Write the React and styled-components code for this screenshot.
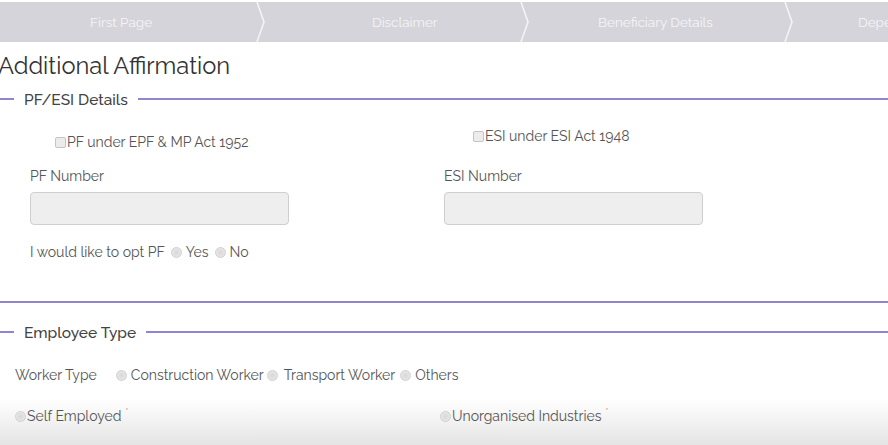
import React from "react";
import styled, { createGlobalStyle } from "styled-components";

const GlobalStyle = createGlobalStyle`
  html, body { margin: 0; padding: 0; }
  body {
    font-family: "Raleway", Lato, "Noto Sans", sans-serif;
    color: #555;
    background: #fff;
    overflow: hidden;
  }
`;

const Page = styled.div`
  width: 888px;
  height: 445px;
  overflow: hidden;
  background: linear-gradient(to bottom, #fff 0, #fff 398px, #f3f3f3 420px, #e4e4e4 445px);
`;

const StepBar = styled.div`
  display: flex;
  height: 40px;
  margin-top: 2px;
  background: #d4d4da;
  overflow: hidden;
`;

const Step = styled.div`
  flex: 0 0 ${(p) => p.$w}px;
  display: flex;
  align-items: center;
  padding-left: ${(p) => p.$pad}px;
  box-sizing: border-box;
  color: #f5f5f8;
  font-size: 13.5px;
  white-space: nowrap;
`;

const Sep = styled.svg`
  flex: 0 0 10px;
  height: 40px;
  display: block;
`;

const Chevron = () => (
  <Sep viewBox="0 0 10 40">
    <path d="M1 0 L8 20 L1 40" fill="none" stroke="#f4f4f6" strokeWidth="1.6" />
  </Sep>
);

const Heading = styled.h1`
  margin: 10px 0 0 -2px;
  font-size: 23.7px;
  font-weight: 400;
  color: #333;
  line-height: 28px;
  height: 28px;
`;

const LegendRow = styled.div`
  display: flex;
  align-items: center;
  margin-top: ${(p) => p.$mt}px;
  height: 20px;
`;

const Line = styled.div`
  height: 2px;
  background: #8f86cf;
  flex: ${(p) => (p.$grow ? "1 1 auto" : `0 0 ${p.$w}px`)};
`;

const LegendText = styled.span`
  padding: 0 10px;
  font-size: 15.5px;
  font-weight: 500;
  color: #444;
`;

const Grid = styled.div`
  display: grid;
  grid-template-columns: 414px 414px;
  padding-left: 30px;
`;

const Col = styled.div`
  display: flex;
  flex-direction: column;
`;

const CheckRow = styled.label`
  display: flex;
  align-items: center;
  margin-left: ${(p) => p.$ml}px;
  margin-top: ${(p) => p.$mt}px;
  font-size: 14px;
  color: #555;
  height: 16px;
`;

const Check = styled.input.attrs({ type: "checkbox" })`
  appearance: none;
  margin: 0 1px 0 0;
  width: 11px;
  height: 11px;
  border: 1px solid #c4c4c4;
  border-radius: 2px;
  background: #ececec;
  box-sizing: border-box;
`;

const FieldLabel = styled.div`
  margin-top: ${(p) => p.$mt}px;
  font-size: 14px;
  color: #555;
  height: 16px;
  line-height: 16px;
`;

const Input = styled.input`
  margin-top: 8px;
  width: 259px;
  height: 33px;
  box-sizing: border-box;
  background: #eeeeee;
  border: 1px solid #cfcfcf;
  border-radius: 4px;
`;

const OptRow = styled.div`
  display: flex;
  align-items: center;
  margin-top: 19px;
  padding-left: 30px;
  font-size: 14px;
  color: #555;
  height: 16px;
`;

const Radio = styled.input.attrs({ type: "radio" })`
  appearance: none;
  margin: 0 ${(p) => p.$mr ?? 4}px 0 ${(p) => p.$ml ?? 0}px;
  width: 11px;
  height: 11px;
  border-radius: 50%;
  border: 1px solid #d0d0d0;
  background: radial-gradient(circle, #d8d8d8 0, #e4e4e4 60%, #eee 100%);
  box-sizing: border-box;
`;

const Divider = styled.div`
  height: 2px;
  background: #8f86cf;
  margin-top: 41px;
`;

const WorkerRow = styled.div`
  display: flex;
  align-items: center;
  padding-left: 15px;
  margin-top: 24px;
  font-size: 14px;
  color: #555;
  height: 18px;
`;

const RowLabel = styled.span`
  margin-right: 19px;
`;

const TypeRow = styled.div`
  display: grid;
  grid-template-columns: 425px auto;
  padding-left: 15px;
  margin-top: 23px;
  font-size: 14px;
  color: #555;
`;

const TypeItem = styled.label`
  display: flex;
  align-items: center;
  height: 18px;
`;

const Req = styled.span`
  color: #e05a5a;
  font-size: 9px;
  margin-left: 4px;
  align-self: flex-start;
`;

export default function App() {
  return (
    <Page>
      <GlobalStyle />
      <StepBar>
        <Step $w={256} $pad={90}>First Page</Step>
        <Chevron />
        <Step $w={254} $pad={106}>Disclaimer</Step>
        <Chevron />
        <Step $w={254} $pad={68}>Beneficiary Details</Step>
        <Chevron />
        <Step $w={120} $pad={64}>Dependent Details</Step>
      </StepBar>
      <Heading>Additional Affirmation</Heading>
      <LegendRow $mt={9}>
        <Line $w={14} />
        <LegendText>PF/ESI Details</LegendText>
        <Line $grow />
      </LegendRow>
      <Grid>
        <Col>
          <CheckRow $ml={25} $mt={25}>
            <Check />
            PF under EPF &amp; MP Act 1952
          </CheckRow>
          <FieldLabel $mt={18}>PF Number</FieldLabel>
          <Input disabled />
        </Col>
        <Col>
          <CheckRow $ml={29} $mt={19}>
            <Check />
            ESI under ESI Act 1948
          </CheckRow>
          <FieldLabel $mt={24}>ESI Number</FieldLabel>
          <Input disabled />
        </Col>
      </Grid>
      <OptRow>
        I would like to opt PF
        <Radio $ml={6} $mr={4} name="opt" />
        Yes
        <Radio $ml={6} $mr={4} name="opt" />
        No
      </OptRow>
      <Divider />
      <LegendRow $mt={19}>
        <Line $w={14} />
        <LegendText>Employee Type</LegendText>
        <Line $grow />
      </LegendRow>
      <WorkerRow>
        <RowLabel>Worker Type</RowLabel>
        <Radio $mr={4} name="wt" />
        Construction Worker
        <Radio $ml={3} $mr={6} name="wt" />
        Transport Worker
        <Radio $ml={5} $mr={4} name="wt" />
        Others
      </WorkerRow>
      <TypeRow>
        <TypeItem>
          <Radio $mr={1} name="et" />
          Self Employed
          <Req>*</Req>
        </TypeItem>
        <TypeItem>
          <Radio $mr={1} name="et" />
          Unorganised Industries
          <Req>*</Req>
        </TypeItem>
      </TypeRow>
    </Page>
  );
}
